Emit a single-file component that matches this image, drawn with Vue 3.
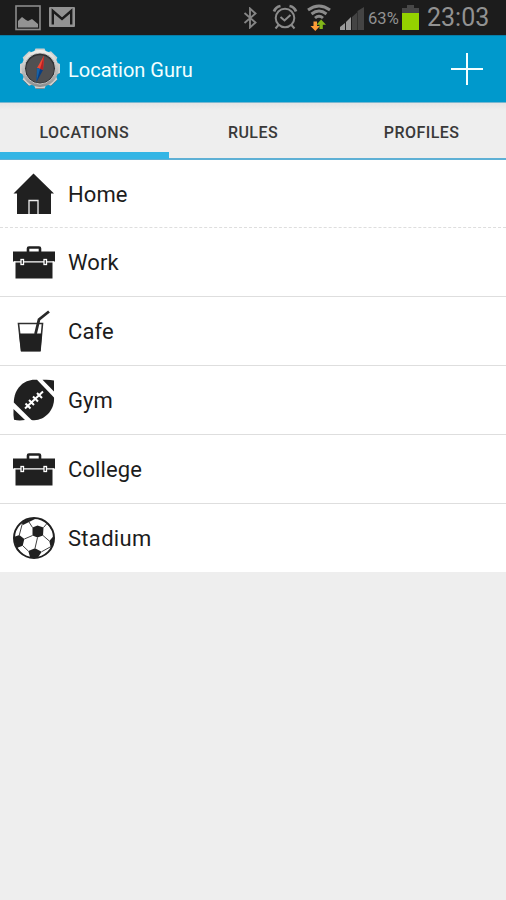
<script setup>
const tabs = ['LOCATIONS', 'RULES', 'PROFILES']
const locations = [
  { name: 'Home', icon: 'home' },
  { name: 'Work', icon: 'case' },
  { name: 'Cafe', icon: 'drink' },
  { name: 'Gym', icon: 'football' },
  { name: 'College', icon: 'case' },
  { name: 'Stadium', icon: 'soccer' }
]
</script>

<template>
  <div class="screen">
    <header class="status">
      <svg class="picture" width="26" height="26" viewBox="0 0 26 26">
        <rect x="1" y="1" width="24" height="23.5" fill="none" stroke="#8b8b8b" stroke-width="1.6" />
        <path d="M3 22.500V16l4-4 4 3 2 1 4-2 6 5v3.500z" fill="#929292" />
      </svg>
      <svg class="mail" width="26" height="20" viewBox="0 0 26 20">
        <rect width="26" height="20" rx="1" fill="#929292" />
        <path d="M3.800 17.500V4l9.200 8 9.200-8v13.500" fill="none" stroke="#1c1c1c" stroke-width="2.400" />
      </svg>
      <span class="grow"></span>
      <svg class="bluetooth" width="14" height="22" viewBox="0 0 14 22">
        <path d="M1.500 6l11 9.500-5.500 5V1.500l5.500 5L1.500 16" fill="none" stroke="#858585" stroke-width="1.900" />
      </svg>
      <svg class="alarm" width="26" height="26" viewBox="0 0 26 26" fill="none" stroke="#8b8b8b">
        <circle cx="13" cy="14" r="9.300" stroke-width="2" />
        <path d="M2 7.500Q3.500 3 8.500 2M24 7.500Q22.500 3 17.500 2" stroke-width="2.800" />
        <path d="M8.500 13l4 3.500 6-5.500M6.500 21l-3 3.500M19.500 21l3 3.500" stroke-width="2" />
      </svg>
      <svg class="wifi" width="24" height="27" viewBox="0 0 24 27">
        <g fill="none" stroke="#8b8b8b" stroke-width="2.900">
          <path d="M1 6q11-8 22 0M4.500 10q7.500-6 15 0M8 14q4-3.500 8 0" />
        </g>
        <path d="M6.500 17.500h3.500V22h3l-4.700 5L3.500 22h3z" fill="#ff9c38" />
        <path d="M12.500 25h3.300v-4.300H19l-4.900-5.200-4.600 5.200h3z" fill="#83b719" />
      </svg>
      <svg class="signal" width="24" height="23" viewBox="0 0 24 23">
        <path d="M0 23v-3l5-4v7z" fill="#999" />
        <path d="M6 23v-8l5-5v13z" fill="#999" />
        <path d="M12 23V10l5-4.500V23zM17.500 23V4L24 0v23z" fill="#444" />
      </svg>
      <span class="percent">63%</span>
      <svg class="battery" width="17" height="25" viewBox="0 0 17 25">
        <path d="M5 0h7v3h5v5H0V3h5z" fill="#484848" />
        <path d="M0 8h17v17H0z" fill="#94d300" />
      </svg>
      <time class="clock">23:03</time>
    </header>

    <div class="actionbar">
      <svg class="logo" width="42" height="42" viewBox="0 0 42 42">
        <defs>
          <linearGradient id="metal" x2="0" y2="1">
            <stop stop-color="#f0f0ec" />
            <stop offset=".6" stop-color="#b8b9b9" />
            <stop offset="1" stop-color="#8b8c8d" />
          </linearGradient>
        </defs>
        <g fill="#37464e" transform="translate(0 1)">
          <path v-for="n in 8" :key="n" d="M15.500 7L17 1h8l1.500 6z" :transform="`rotate(${n * 45} 21 20.500)`" />
        </g>
        <path v-for="n in 8" :key="n" d="M14 6L16.500 .5h9L28 6z" fill="#d0d1cf" :transform="`rotate(${n * 45} 21 20.500)`" />
        <circle cx="21" cy="20.500" r="18.500" fill="url(#metal)" />
        <circle cx="21" cy="20.500" r="15.500" fill="#303234" stroke="#ddd" stroke-width=".8" />
        <circle cx="21" cy="21" r="13.800" fill="#505052" />
        <path d="M25 7.500l-7 12.500 6 2z" fill="#ef4935" />
        <path d="M25 7.500l-4 13.500 3 1z" fill="#b92023" />
        <path d="M17.500 34l.5-14 6 2z" fill="#073e83" />
        <path d="M17.500 34l3.500-13-3-1z" fill="#1762a7" />
      </svg>
      <h1>Location Guru</h1>
      <span class="grow"></span>
      <svg class="plus" width="32" height="32" viewBox="0 0 32 32">
        <path d="M16 0v32M0 16h32" stroke="#f4ffff" stroke-width="2" />
      </svg>
    </div>

    <nav class="tabs">
      <div v-for="(tab, i) in tabs" :key="tab" class="tab" :class="{ active: i === 0 }"><span>{{ tab }}</span></div>
    </nav>

    <main class="list">
      <div v-for="item in locations" :key="item.name" class="row">
        <svg v-if="item.icon === 'home'" class="icon" viewBox="0 0 42 42">
          <path d="M20.500 .5L41 20.500h-3V41H4V20.500H.5z" fill="#202020" />
          <path d="M16 41V27.500h9V41" fill="none" stroke="#eee" stroke-width="1.300" />
        </svg>
        <svg v-else-if="item.icon === 'case'" class="icon" viewBox="0 0 42 42">
          <path d="M15 11V7.500q0-1 1-1h10q1 0 1 1V11" fill="none" stroke="#202020" stroke-width="2.600" />
          <path d="M0 10.500h42v10H0zM2.500 20h37v17.500h-37z" fill="#202020" />
          <path d="M1 20.800h40" stroke="#fff" stroke-width="1.300" />
          <g fill="#202020" stroke="#fff" stroke-width="1.300">
            <rect x="8" y="18.500" width="2.500" height="5" />
            <rect x="31" y="18.500" width="2.500" height="5" />
          </g>
        </svg>
        <svg v-else-if="item.icon === 'drink'" class="icon" viewBox="0 0 42 42">
          <path d="M5.500 13.500h24l-2.500 27H8.500z" fill="none" stroke="#303030" stroke-width="1.600" />
          <path d="M6 23.500h23L27.500 41.500H8z" fill="#202020" />
          <path d="M22.500 24L26 9.500 36 1.500" fill="none" stroke="#282828" stroke-width="2.800" />
        </svg>
        <svg v-else-if="item.icon === 'football'" class="icon" viewBox="0 0 42 42">
          <path d="M24 .8L41 18.500C42 31 31 43 18.500 41L.8 23.500C1 8.500 12-.5 24 .8z" fill="#202020" />
          <path d="M29.500 .8Q36 .3 41 1.500V12.500zM.5 30L12 41Q6 42 1 40.800Q.2 36 .5 30z" fill="#202020" />
          <g stroke="#fff" stroke-width="2">
            <path d="M12 29.500L30 12.500M12.500 24.500l5 5M16 21l5 5M20 17.500l5 5M24 14l5 5" />
          </g>
        </svg>
        <svg v-else class="icon" viewBox="0 0 42 42">
          <path d="M19.500 10.500L16 5M30.500 10.500L33.500 7M30 18.500l6.300 5.500M24.500 20.500L22 31.300M19.500 18.500L11.300 22M6.300 18L9.500 6M9.700 28.700l5.600 5.300M28.700 34.700l9-5M3.500 30l3.500 5" fill="none" stroke="#404040" />
          <path d="M19.500 10.500l5-2 6 2-.5 8-5.500 2-5-2zM1.500 19.700L6.300 18l5 4-1.600 6.700-6 2.300Q1 25 1.500 19.700zM40.800 18.700L36.300 24l1.400 6.500Q42 25 40.800 18.700zM15.300 34l6.700-2.700 6.700 3.400-3.400 5.300H17zM9 6Q14 1 23 1.500l-7 3.500-6 3zM31 4l5 5 3 5Q37 7 31 4z" fill="#202020" />
          <circle cx="21" cy="21" r="20" fill="none" stroke="#202020" stroke-width="2" />
        </svg>
        <span class="name" :class="item.icon">{{ item.name }}</span>
      </div>
    </main>
  </div>
</template>

<style>
body { margin: 0; background: #eee; }
</style>

<style scoped>
.screen { width: 506px; height: 900px; background: #eee; font-family: Roboto, "Noto Sans", sans-serif; overflow: hidden; }
.grow { flex: 1; }
svg { display: block; flex-shrink: 0; }
.status { height: 35px; box-sizing: border-box; display: flex; align-items: flex-start; padding: 0 16px 0 15px; background: #1c1c1c; color: #929292; }
.picture { margin-top: 5px; }
.mail { margin: 7px 0 0 8px; }
.bluetooth { margin: 7px 15px 0 0; }
.alarm { margin: 4px 9px 0 0; }
.wifi { margin: 4px 9px 0 0; }
.signal { margin: 7px 4px 0 0; }
.percent { width: 34px; font-size: 16.5px; line-height: 37px; letter-spacing: .1px; }
.battery { margin-top: 5px; }
.clock { width: 63px; margin-left: 8px; font-size: 25px; line-height: 36px; white-space: nowrap; }
.actionbar { height: 68px; box-sizing: border-box; display: flex; align-items: center; padding: 0 23px 0 19px; background: #0099cc; border-top: 1px solid #087da7; border-bottom: 1px solid #79b7d0; }
h1 { margin: 2px 0 0 7px; color: #f2ffff; font-size: 20px; font-weight: 400; line-height: 28px; }
.tabs { height: 57px; display: grid; grid-template-columns: repeat(3, 1fr); box-sizing: border-box; border-bottom: 2px solid #5eb0d5; background: linear-gradient(#e4e4e4, #eee 7px); }
.tab { display: flex; align-items: center; justify-content: center; box-sizing: border-box; padding-top: 3px; color: #393939; font-size: 16px; font-weight: 500; letter-spacing: .45px; }
.active { border-bottom: 7px solid #33b5e5; padding-top: 10px; margin-bottom: -1px; }
.row { height: 69px; box-sizing: border-box; display: flex; align-items: center; padding-left: 13px; background: #fff; border-bottom: 1px solid #dedede; }
.row:first-child { height: 68px; border-bottom-style: dashed; }
.row:last-child { border-bottom-color: #eee; }
.icon { width: 42px; height: 42px; }
.name { margin: 2px 0 0 13px; color: #1c1c1c; font-size: 22px; line-height: 30px; letter-spacing: .1px; }
.soccer { letter-spacing: .3px; }
</style>
